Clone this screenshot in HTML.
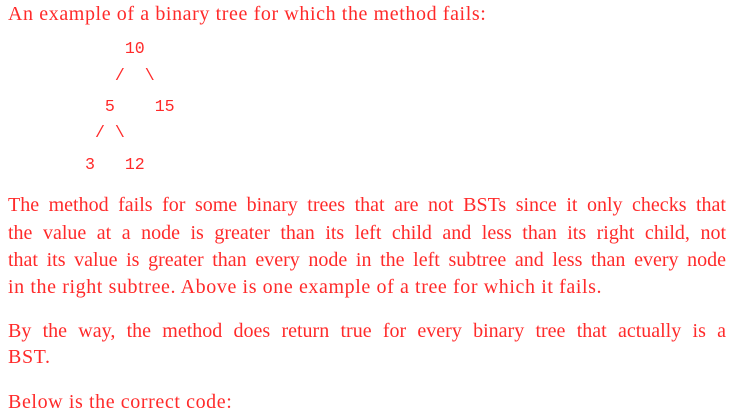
<!DOCTYPE html>
<html><head><meta charset="utf-8"><style>
body{margin:0;background:#fff;width:734px;height:414px;overflow:hidden;position:relative;color:#ff2a2a;font-family:"Liberation Serif",serif;font-size:20px;letter-spacing:0.6px}
.l{position:absolute;left:8px;white-space:nowrap;line-height:22px}
.j{width:718px;text-align:justify;text-align-last:justify;white-space:normal;letter-spacing:0}
.m{position:absolute;font-family:"Liberation Mono",monospace;font-size:16.6px;line-height:20px;white-space:pre;letter-spacing:0}
</style></head><body>
<div class="l" style="top:3px">An example of a binary tree for which the method fails:</div>
<div class="m" style="left:85px;top:39px">    10</div>
<div class="m" style="left:85px;top:66px">   /  \</div>
<div class="m" style="left:85px;top:97px">  5    15</div>
<div class="m" style="left:85px;top:123px"> / \</div>
<div class="m" style="left:85px;top:155px">3   12</div>
<div class="l j" style="top:194px">The method fails for some binary trees that are not BSTs since it only checks that</div>
<div class="l j" style="top:222px">the value at a node is greater than its left child and less than its right child, not</div>
<div class="l j" style="top:249px">that its value is greater than every node in the left subtree and less than every node</div>
<div class="l" style="top:276px">in the right subtree. Above is one example of a tree for which it fails.</div>
<div class="l j" style="top:320px">By the way, the method does return true for every binary tree that actually is a</div>
<div class="l" style="top:346px">BST.</div>
<div class="l" style="top:391px">Below is the correct code:</div>
</body></html>
